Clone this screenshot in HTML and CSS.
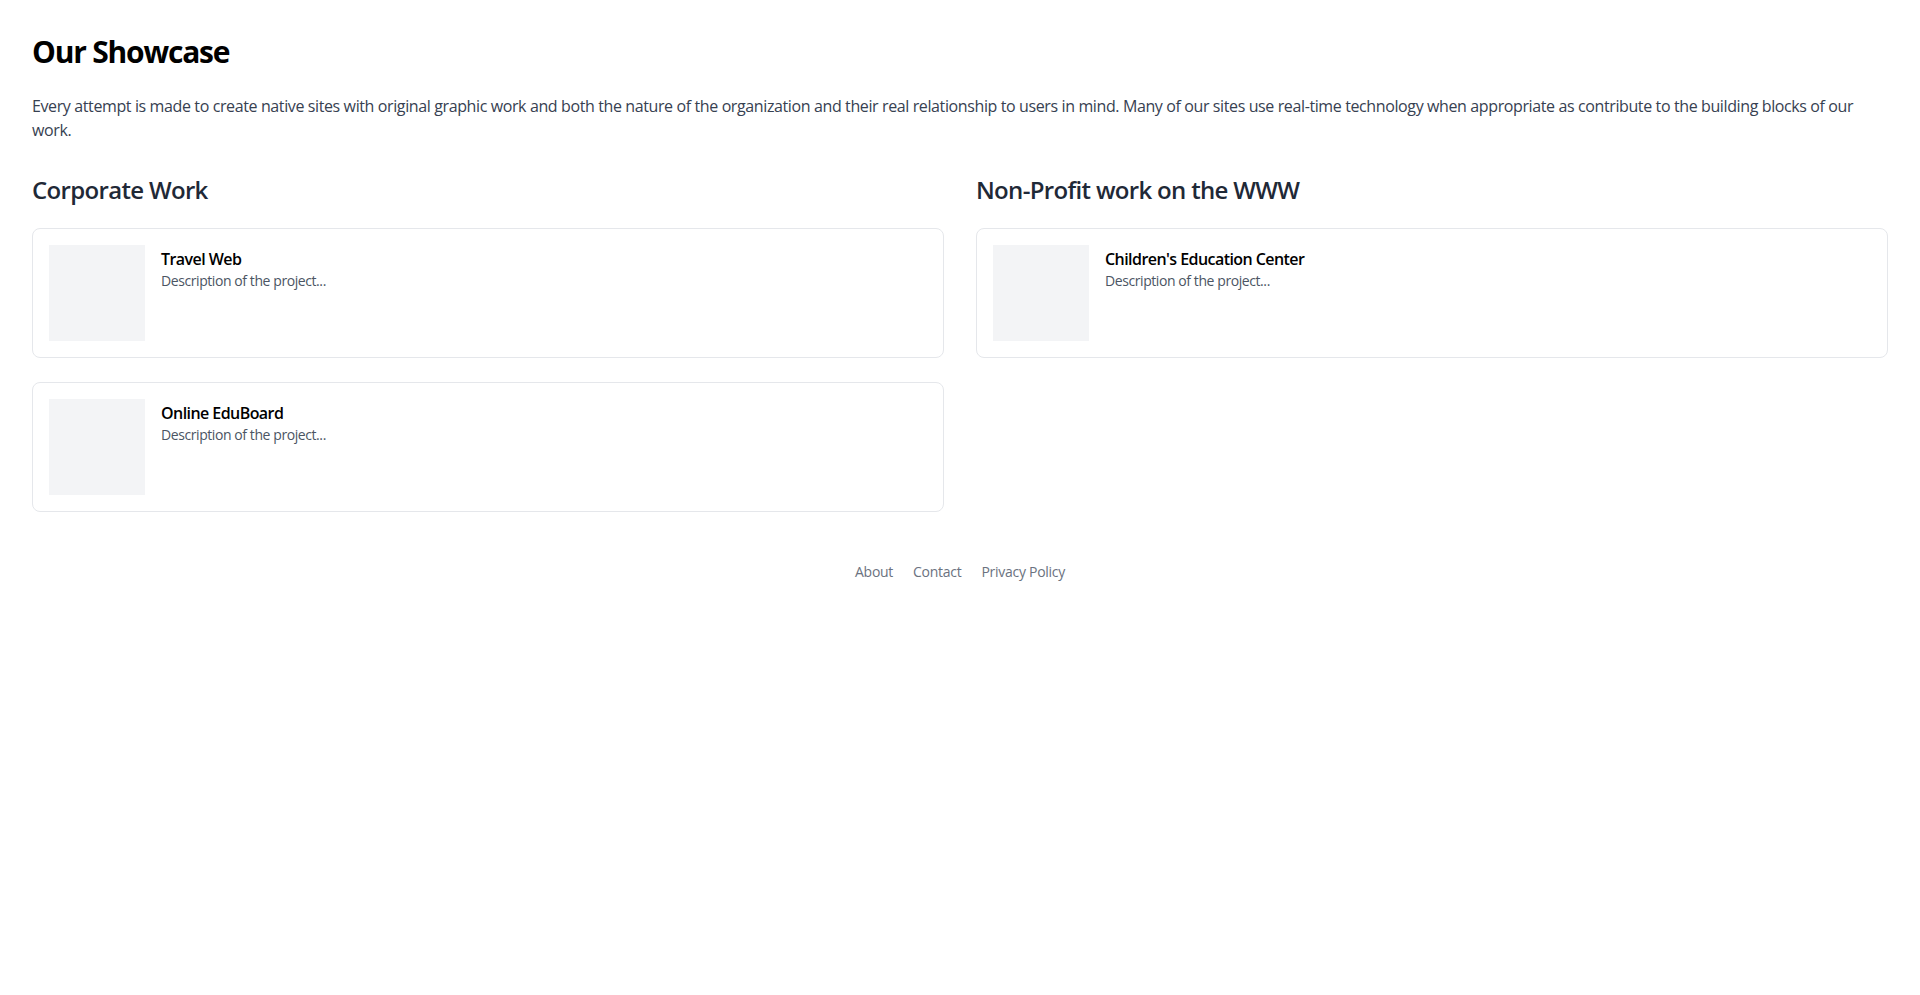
FILE: index.html
```html
<!DOCTYPE html>
<html lang="en">
<head>
<meta charset="utf-8">
<title>Our Showcase</title>
<link rel="stylesheet" href="styles.css">
</head>
<body>
<main class="page">
  <h1 class="title">Our Showcase</h1>
  <p class="intro">Every attempt is made to create native sites with original graphic work and both the nature of the organization and their real relationship to users in mind. Many of our sites use real-time technology when appropriate as contribute to the building blocks of our work.</p>
  <div class="columns">
    <section class="column">
      <h2 class="section-title">Corporate Work</h2>
      <div class="cards">
        <article class="card">
          <div class="thumb"></div>
          <div class="card-body">
            <h3 class="card-title">Travel Web</h3>
            <p class="card-desc">Description of the project...</p>
          </div>
        </article>
        <article class="card">
          <div class="thumb"></div>
          <div class="card-body">
            <h3 class="card-title">Online EduBoard</h3>
            <p class="card-desc">Description of the project...</p>
          </div>
        </article>
      </div>
    </section>
    <section class="column">
      <h2 class="section-title">Non-Profit work on the WWW</h2>
      <div class="cards">
        <article class="card">
          <div class="thumb"></div>
          <div class="card-body">
            <h3 class="card-title">Children's Education Center</h3>
            <p class="card-desc">Description of the project...</p>
          </div>
        </article>
      </div>
    </section>
  </div>
  <footer class="footer">
    <a class="footer-link" href="#">About</a>
    <a class="footer-link" href="#">Contact</a>
    <a class="footer-link" href="#">Privacy Policy</a>
  </footer>
</main>
</body>
</html>
```

FILE: styles.css
```css
* { box-sizing: border-box; }
html, body { margin: 0; padding: 0; background: #ffffff; }
body {
  font-family: "Open Sans", "Noto Sans", "Liberation Sans", sans-serif;
  color: #111827;
}
.page { padding: 32px; }
.title {
  margin: 0 0 22px;
  font-size: 30px;
  line-height: 40px;
  font-weight: 700;
  letter-spacing: -0.04em;
  color: #000000;
}
.intro {
  margin: 0 0 32px;
  font-size: 16px;
  line-height: 24px;
  letter-spacing: -0.024em;
  color: #374151;
}
.columns {
  display: grid;
  grid-template-columns: 1fr 1fr;
  gap: 32px;
}
.section-title {
  margin: 0 0 22px;
  font-size: 24px;
  line-height: 32px;
  font-weight: 600;
  letter-spacing: -0.028em;
  color: #1f2937;
}
.cards { display: flex; flex-direction: column; gap: 24px; }
.card {
  display: flex;
  gap: 16px;
  padding: 16px;
  border: 1px solid #e5e7eb;
  border-radius: 8px;
  background: #fff;
}
.thumb {
  width: 96px;
  height: 96px;
  flex: none;
  background: #f3f4f6;
}
.card-body { padding-top: 2px; }
.card-title {
  margin: 0;
  font-size: 16px;
  line-height: 24px;
  font-weight: 600;
  letter-spacing: -0.035em;
  color: #000000;
}
.card-desc {
  margin: 0;
  font-size: 14px;
  line-height: 20px;
  letter-spacing: -0.03em;
  color: #4b5563;
}
.footer {
  margin-top: 50px;
  display: flex;
  justify-content: center;
  gap: 20px;
  font-size: 14px;
  line-height: 20px;
  letter-spacing: -0.02em;
}
.footer-link { color: #6b7280; text-decoration: none; }
```
